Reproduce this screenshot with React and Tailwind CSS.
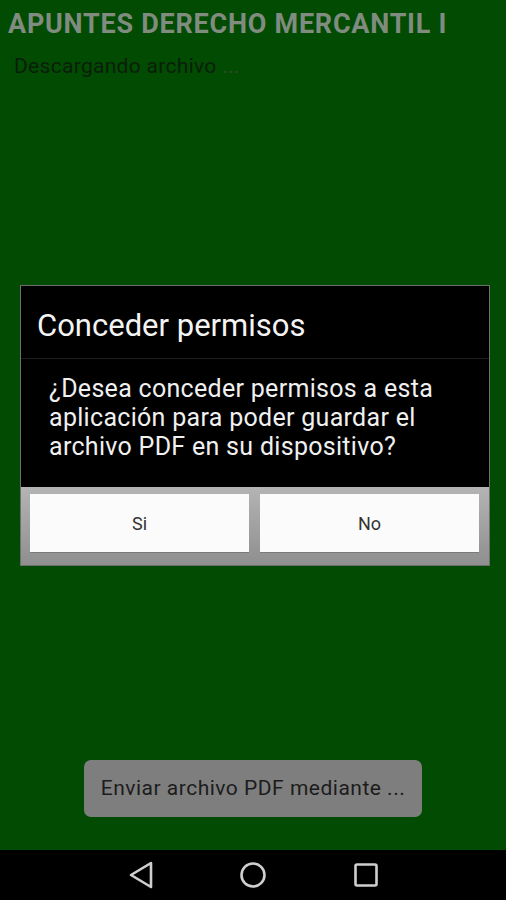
import React from "react";

const NavBar = () => (
  <div className="h-[50px] bg-black flex items-center justify-center">
    <div className="flex items-center">
      {/* back */}
      <svg width="28" height="30" viewBox="0 0 28 30">
        <path d="M24 3 L4 15 L24 27 Z" fill="none" stroke="#cfcfcf" strokeWidth="2.6" strokeLinejoin="round" />
      </svg>
      {/* home */}
      <svg width="28" height="28" viewBox="0 0 28 28" className="ml-[84px]">
        <circle cx="14" cy="14" r="11.5" fill="none" stroke="#cfcfcf" strokeWidth="2.6" />
      </svg>
      {/* recents */}
      <svg width="26" height="26" viewBox="0 0 26 26" className="ml-[86px]">
        <rect x="2.5" y="2.5" width="21" height="21" rx="1.5" fill="none" stroke="#cfcfcf" strokeWidth="2.6" />
      </svg>
    </div>
  </div>
);

const PermissionDialog = () => (
  <div className="ml-[20px] mr-[16px] mt-[207px] border border-[#6f6f6f] bg-black">
    <div className="pl-[16px] pt-[22px] pb-[14px] border-b border-[#1c1c1c]">
      <h2 className="text-[31px] leading-[36px] text-[#f4f4f4]">Conceder permisos</h2>
    </div>
    <p className="pl-[28px] pr-[8px] pt-[15px] pb-[26px] text-[25px] leading-[29px] tracking-[0.3px] text-[#f0f0f0] whitespace-nowrap">
      ¿Desea conceder permisos a esta
      <br />
      aplicación para poder guardar el
      <br />
      archivo PDF en su dispositivo?
    </p>
    <div className="flex gap-[11px] pl-[9px] pr-[10px] pt-[7px] pb-[13px] bg-gradient-to-b from-[#b4b4b4] to-[#8f8f8f]">
      <button className="flex-1 h-[58px] bg-[#fbfbfb] text-[18px] text-[#333] shadow-[0_1px_0_#7a7a7a]">Si</button>
      <button className="flex-1 h-[58px] bg-[#fbfbfb] text-[18px] text-[#333] shadow-[0_1px_0_#7a7a7a]">No</button>
    </div>
  </div>
);

export default function App() {
  return (
    <div
      className="w-[506px] h-[900px] flex flex-col bg-[#024b02] overflow-hidden"
      style={{ fontFamily: "Roboto, 'Liberation Sans', sans-serif" }}
    >
      <div className="flex-1 flex flex-col">
        <h1 className="pl-[8px] pt-[9px] text-[27px] leading-[30px] font-bold tracking-[0.75px] text-[#808c80] whitespace-nowrap">
          APUNTES DERECHO MERCANTIL I
        </h1>
        <p className="pl-[14px] mt-[15px] text-[21px] leading-[24px] tracking-[0.3px] text-[#0a1f0a]">
          Descargando archivo <span className="text-[#2f4a2f]">...</span>
        </p>

        <PermissionDialog />

        <div className="mt-[194px] ml-[84px] w-[338px] h-[57px] rounded-[7px] bg-[#7e7e7e] flex items-center justify-center">
          <span className="text-[21px] tracking-[0.5px] text-[#1c1c1c] whitespace-nowrap">Enviar archivo PDF mediante ...</span>
        </div>
      </div>
      <NavBar />
    </div>
  );
}
